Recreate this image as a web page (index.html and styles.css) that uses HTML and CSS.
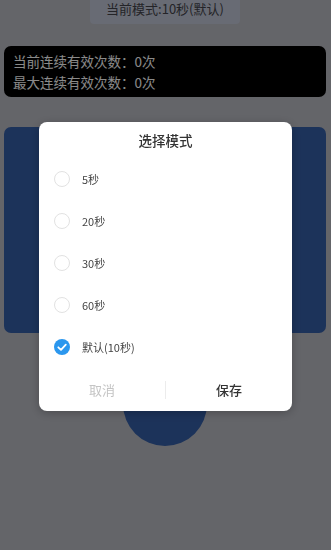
FILE: index.html
```html
<!DOCTYPE html>
<html lang="zh">
<head>
<meta charset="utf-8">
<link rel="stylesheet" href="styles.css">
</head>
<body>
<main class="page">
  <div class="mode-pill">当前模式:10秒(默认)</div>
  <div class="stats">
    <div class="stat-line">当前连续有效次数：0次</div>
    <div class="stat-line">最大连续有效次数：0次</div>
  </div>
  <div class="panel"></div>
  <div class="start-btn"></div>
</main>
<div class="mask"></div>
<div class="dialog">
  <div class="dialog-title">选择模式</div>
  <ul class="options">
    <li class="option"><span class="radio"></span><span class="label">5秒</span></li>
    <li class="option"><span class="radio"></span><span class="label">20秒</span></li>
    <li class="option"><span class="radio"></span><span class="label">30秒</span></li>
    <li class="option"><span class="radio"></span><span class="label">60秒</span></li>
    <li class="option"><span class="radio checked"><svg viewBox="0 0 16 16" width="16" height="16"><path d="M4.3 8.3 L7 10.8 L11.8 5.6" fill="none" stroke="#fff" stroke-width="1.8" stroke-linecap="round" stroke-linejoin="round"/></svg></span><span class="label">默认(10秒)</span></li>
  </ul>
  <div class="actions">
    <div class="btn cancel">取消</div>
    <div class="divider"></div>
    <div class="btn save">保存</div>
  </div>
</div>
</body>
</html>
```
FILE: styles.css
```css
html, body {
  margin: 0;
  padding: 0;
  height: 100%;
}
body {
  background: #a7a8af;
  font-family: "Noto Sans CJK SC", "Noto Sans", sans-serif;
  overflow: hidden;
}
.page {
  display: flex;
  flex-direction: column;
  align-items: center;
  padding: 0 5px 0 4px;
}
.mode-pill {
  padding: 2px 16px 9px;
  background: #aeb3c1;
  color: #3c3c44;
  font-size: 13px;
  line-height: 13px;
  border-radius: 0 0 4px 4px;
}
.stats {
  align-self: stretch;
  margin-top: 22px;
  background: #000;
  border-radius: 7px;
  padding: 5px 9px 4px;
  color: #e6e6e6;
  font-size: 13.5px;
  line-height: 21px;
}
.panel {
  align-self: stretch;
  margin-top: 30px;
  height: 206px;
  background: #2f5596;
  border-radius: 7px;
}
.start-btn {
  margin-top: 29px;
  width: 84px;
  height: 84px;
  border-radius: 50%;
  background: #2f5596;
}
.mask {
  position: fixed;
  inset: 0;
  background: rgba(0, 0, 0, 0.4);
}
.dialog {
  position: fixed;
  top: 122px;
  left: 39px;
  width: 253px;
  background: #fff;
  border-radius: 8px;
  box-shadow: 0 2px 10px rgba(0, 0, 0, 0.25);
  display: flex;
  flex-direction: column;
}
.dialog-title {
  height: 36px;
  display: flex;
  align-items: center;
  justify-content: center;
  font-size: 13.5px;
  font-weight: 500;
  color: #333;
}
.options {
  list-style: none;
  margin: 0;
  padding: 0;
}
.option {
  height: 42px;
  display: flex;
  align-items: center;
  padding-left: 15px;
}
.radio {
  width: 16px;
  height: 16px;
  box-sizing: border-box;
  border: 1px solid #e2e2e2;
  border-radius: 50%;
  display: flex;
}
.radio.checked {
  border: none;
  background: #2b97ee;
}
.label {
  margin-left: 12px;
  font-size: 11px;
  color: #444;
}
.actions {
  height: 43px;
  display: flex;
  align-items: center;
}
.btn {
  flex: 1;
  text-align: center;
  font-size: 13px;
}
.cancel {
  color: #c4c4c4;
}
.save {
  color: #333;
  font-weight: 500;
}
.divider {
  width: 1px;
  height: 18px;
  background: #ececec;
}
```
